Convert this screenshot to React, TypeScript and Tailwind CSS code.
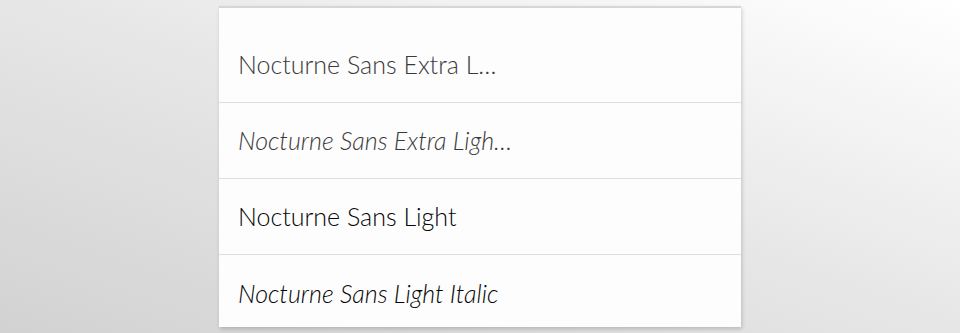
import React from 'react';

interface FontRow {
  label: string;
  italic: boolean;
  tone: 'extra' | 'light';
}

const rows: FontRow[] = [
  { label: 'Nocturne Sans Extra L…', italic: false, tone: 'extra' },
  { label: 'Nocturne Sans Extra Ligh…', italic: true, tone: 'extra' },
  { label: 'Nocturne Sans Light', italic: false, tone: 'light' },
  { label: 'Nocturne Sans Light Italic', italic: true, tone: 'light' }
];

const App: React.FC = () => {
  return (
    <div className="h-[333px] w-full overflow-hidden bg-linear-to-tr from-[#d2d2d2] via-[#e6e6e6] to-[#ffffff] pt-[6px]">
      <div className="mx-auto h-[321px] w-[522px] overflow-hidden border-t-2 border-[#d6d6d6] bg-[#fdfdfd] pt-[19px] shadow-[1px_2px_4px_rgba(0,0,0,0.18)]">
        {rows.map((row, i) => (
          <div
            key={row.label}
            className={`flex h-[76px] items-center pl-[19px] ${i < rows.length - 1 ? 'border-b border-[#dedede]' : ''}`}
          >
            <span
              className={`font-['Lato','Liberation_Sans',sans-serif] text-[25px] font-light leading-none ${row.italic ? 'italic' : ''} ${row.tone === 'extra' ? 'text-[#3a3a3a]' : 'text-[#050505]'}`}
            >
              {row.label}
            </span>
          </div>
        ))}
      </div>
    </div>
  );
};

export default App;
